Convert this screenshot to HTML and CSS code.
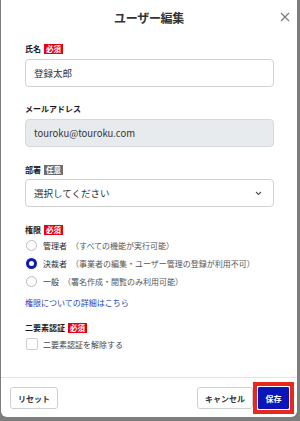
FILE: index.html
```html
<!DOCTYPE html>
<html lang="ja">
<head>
<meta charset="utf-8">
<link rel="stylesheet" href="styles.css">
</head>
<body>
<div class="modal">
  <div class="header">
    <h1 class="title">ユーザー編集</h1>
    <button class="close" aria-label="閉じる">
      <svg width="10" height="10" viewBox="0 0 10 10"><path d="M1 1L9 9M9 1L1 9" stroke="#777" stroke-width="1.1" fill="none"/></svg>
    </button>
  </div>
  <div class="body">
    <div class="field first">
      <div class="label">氏名<span class="badge req">必須</span></div>
      <div class="input">登録太郎</div>
    </div>
    <div class="field f2">
      <div class="label">メールアドレス</div>
      <div class="input disabled">touroku@touroku.com</div>
    </div>
    <div class="field f3">
      <div class="label">部署<span class="badge opt">任意</span></div>
      <div class="input select">選択してください
        <svg class="chev" width="7" height="5" viewBox="0 0 7 5"><path d="M1 1L3.5 3.5L6 1" stroke="#555" stroke-width="1.1" fill="none"/></svg>
      </div>
    </div>
    <div class="field f4">
      <div class="label">権限<span class="badge req">必須</span></div>
      <div class="radios">
        <div class="radio"><span class="circle"></span><span class="rt">管理者</span><span class="note">（すべての機能が実行可能）</span></div>
        <div class="radio"><span class="circle on"></span><span class="rt">決裁者</span><span class="note">（事業者の編集・ユーザー管理の登録が利用不可）</span></div>
        <div class="radio"><span class="circle"></span><span class="rt">一般</span><span class="note">（署名作成・閲覧のみ利用可能）</span></div>
      </div>
      <a class="link">権限についての詳細はこちら</a>
    </div>
    <div class="field f5">
      <div class="label">二要素認証<span class="badge req">必須</span></div>
      <div class="check"><span class="box"></span><span class="rt">二要素認証を解除する</span></div>
    </div>
  </div>
  <div class="footer">
    <button class="btn">リセット</button>
    <div class="spacer"></div>
    <button class="btn cancel">キャンセル</button>
    <span class="highlight"><button class="btn save">保存</button></span>
  </div>
</div>
</body>
</html>
```

FILE: styles.css
```css
* { box-sizing: border-box; }
html, body { margin: 0; padding: 0; }
body {
  width: 300px;
  height: 421px;
  background: #7d7d7d;
  font-family: "Noto Sans CJK JP", "Noto Sans", sans-serif;
  color: #222;
  overflow: hidden;
}
.modal {
  margin-left: 1px;
  width: 296px;
  height: 417px;
  background: #fff;
  border-radius: 0 0 6px 6px;
  display: flex;
  flex-direction: column;
  position: relative;
}
.header {
  height: 34px;
  display: flex;
  align-items: center;
  justify-content: center;
  position: relative;
}
.title {
  margin: 0;
  font-size: 12px;
  font-weight: 700;
  color: #333;
  letter-spacing: -0.3px;
}
.close {
  position: absolute;
  right: 7px;
  top: 12px;
  width: 10px;
  height: 10px;
  padding: 0;
  border: 0;
  background: none;
  display: flex;
}
.body {
  flex: 1;
  padding: 9px 23px 0 24px;
}
.field { display: flex; flex-direction: column; }
.f2 { margin-top: 16px; }
.f3 { margin-top: 17px; }
.f4 { margin-top: 17px; }
.f5 { margin-top: 13px; }
.label {
  height: 11px;
  display: flex;
  align-items: center;
  font-size: 8px;
  font-weight: 700;
  color: #1a1a1a;
  line-height: 11px;
}
.badge {
  margin-left: 3px;
  height: 10px;
  padding: 0 2px;
  font-size: 7.5px;
  line-height: 10px;
  color: #fff;
  font-weight: 700;
}
.req { background: #e60012; }
.opt { background: #6e6e6e; }
.input {
  margin-top: 5px;
  height: 28px;
  border: 1px solid #d2d2d2;
  border-radius: 4px;
  padding: 0 8px;
  display: flex;
  align-items: center;
  font-size: 9.5px;
  color: #333;
}
.disabled {
  background: #e8ebee;
  border-color: #d5d9dd;
}
.select {
  margin-top: 4px;
  justify-content: space-between;
}
.chev { margin-right: 3px; }
.radios {
  margin-top: 4px;
  display: flex;
  flex-direction: column;
  gap: 6px;
}
.radio, .check {
  height: 12px;
  display: flex;
  align-items: center;
  font-size: 8px;
  color: #2a2a2a;
}
.circle {
  width: 11px;
  height: 11px;
  border-radius: 50%;
  border: 1px solid #bdbdbd;
  margin-left: 1px;
  margin-right: 6px;
  flex: none;
}
.circle.on { border: 3px solid #0d1db3; }
.note { color: #555; margin-left: 4px; }
.link {
  margin-top: 10px;
  height: 12px;
  line-height: 12px;
  font-size: 8px;
  color: #2443c4;
}
.check { margin-top: 5px; color: #444; }
.box {
  width: 12px;
  height: 12px;
  border: 1px solid #cfcfcf;
  border-radius: 2px;
  margin-left: 1px;
  margin-right: 5px;
  flex: none;
}
.footer {
  height: 40px;
  border-top: 1px solid #e4e4e4;
  padding: 9px 3px 8px 9px;
  display: flex;
  align-items: flex-start;
}
.spacer { flex: 1; }
.btn {
  height: 22px;
  padding: 0;
  border: 1px solid #cfcfcf;
  border-radius: 3px;
  background: #fff;
  font-family: inherit;
  font-size: 8px;
  font-weight: 700;
  color: #333;
  width: 48px;
}
.cancel { width: 56px; }
.highlight {
  margin-top: -5px;
  border: 4px solid #e8281c;
  padding: 1px;
  background: #fff;
  display: flex;
}
.save {
  width: 31px;
  background: #0a16b8;
  border-color: #0a16b8;
  border-radius: 1px;
  color: #fff;
}
```
